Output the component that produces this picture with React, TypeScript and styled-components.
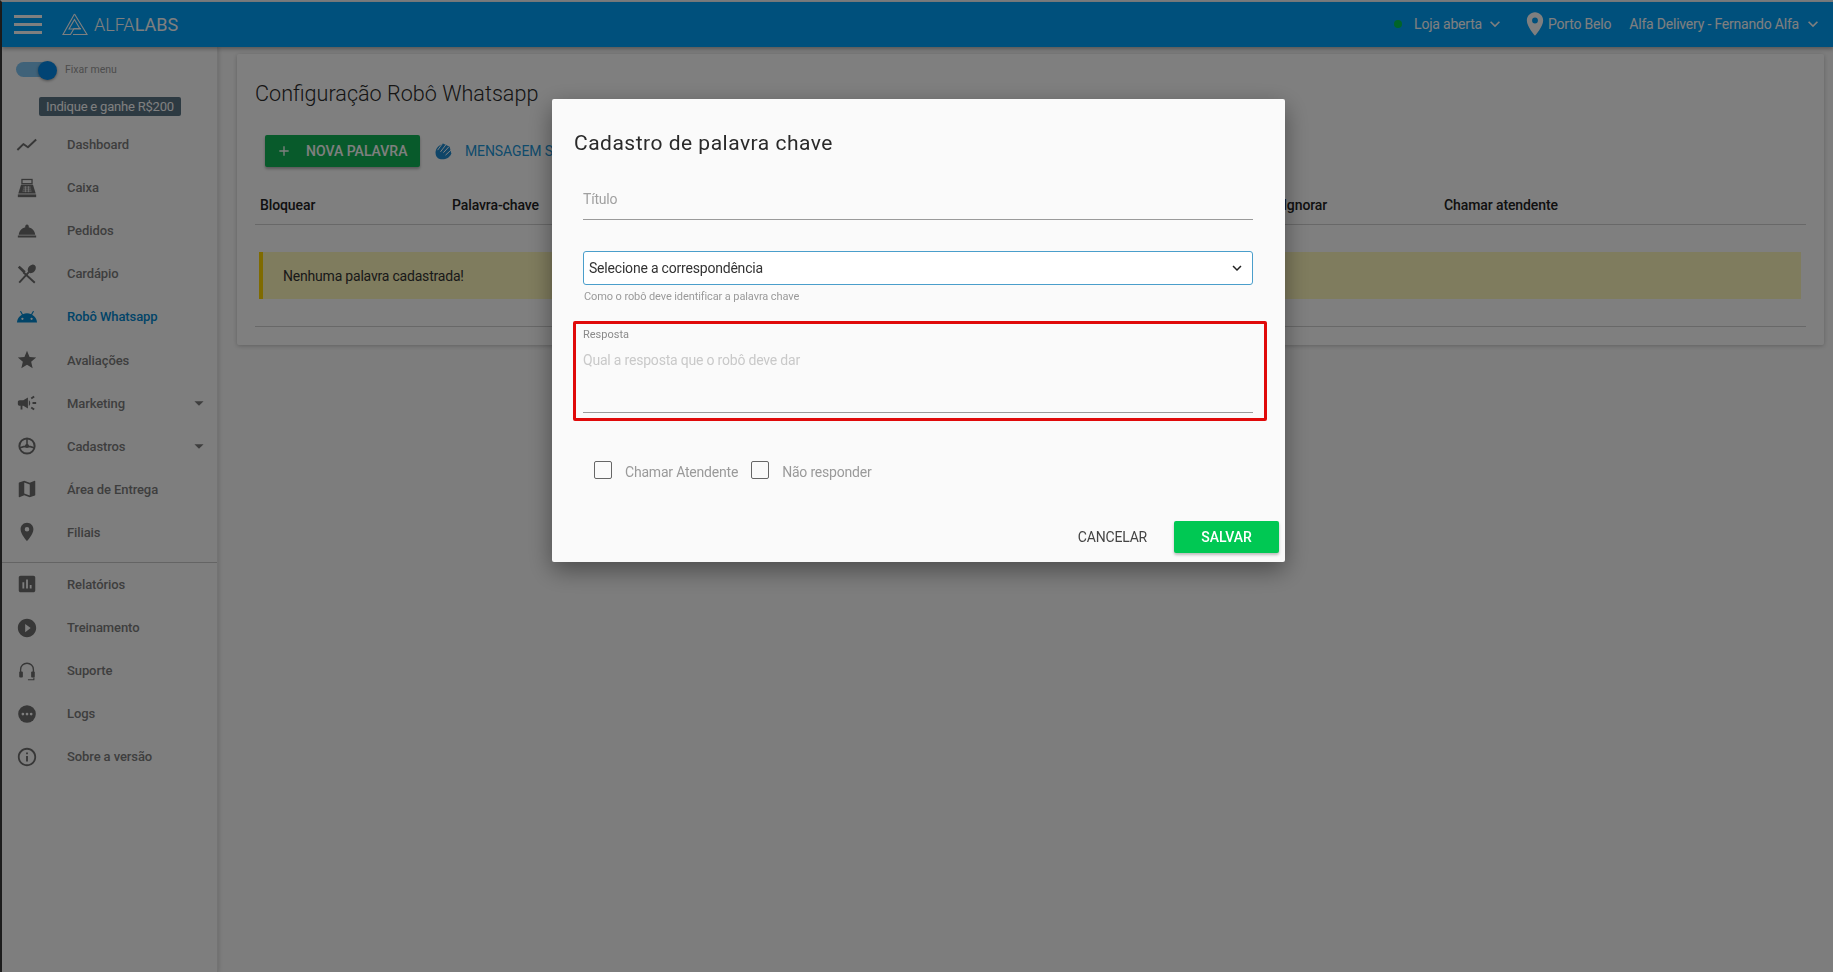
import React from "react";
import styled, { createGlobalStyle } from "styled-components";
import {
  MdRoomService, MdAndroid, MdStar, MdCampaign, MdMap, MdPlace,
  MdAssessment, MdPlayCircleFilled, MdInfoOutline, MdArrowDropDown,
  MdExpandMore, MdAdd,
} from "react-icons/md";

const Global = createGlobalStyle`
  html, body { margin: 0; padding: 0; height: 100%; overflow: hidden; }
  body { background: #fafafa; font-family: Roboto, "Liberation Sans", sans-serif; }
  * { box-sizing: border-box; }
`;
const Page = styled.div`height: 972px; display: flex; flex-direction: column; border-left: 2px solid #3c3c3c; border-top: 2px solid #f4f8fb;`;
const Header = styled.header`height: 45px; background: #01a0f8; flex: none; display: flex; align-items: center; padding: 0 10px 1px 12px; color: #fff; box-shadow: 0 2px 4px rgba(0,0,0,.3); position: relative; z-index: 2;`;
const Burger = styled.div`width: 28px; height: 19px; display: flex; flex-direction: column; justify-content: space-between; margin-right: 20px; span { display: block; height: 3px; background: #fff; }`;
const Logo = styled.div`display: flex; align-items: center; gap: 6px; font-size: 18px; font-weight: 300; b { font-weight: 400; }`;
const HeaderRight = styled.div`margin-left: auto; display: flex; align-items: center; font-size: 14px; letter-spacing: -.2px;`;
const Dot = styled.i`width: 8px; height: 8px; border-radius: 50%; background: #00c853; margin-right: 12px;`;
const HeaderGroup = styled.div<{ $gap: number }>`display: flex; align-items: center; margin-right: ${p => p.$gap}px;`;
const Chevron = styled(MdExpandMore)<{ $left: number }>`width: 20px; height: 20px; margin-left: ${p => p.$left}px;`;
const Pin = styled(MdPlace)`width: 28px; height: 28px; margin-right: -1px;`;
const Body = styled.div`flex: 1; display: flex; min-height: 0;`;
const Sidebar = styled.aside`width: 216px; flex: none; background: #fdfdfd; border-right: 1px solid #e6e6e6; box-shadow: 1px 0 4px rgba(0,0,0,.15); display: flex; flex-direction: column; padding-top: 13px;`;
const ToggleRow = styled.div`display: flex; align-items: center; padding-left: 14px; font-size: 10.5px; color: #9a9a9a; height: 18px;`;
const Track = styled.div`width: 38px; height: 15px; border-radius: 8px; background: #7fc4f2; position: relative; margin-right: 11px;`;
const Knob = styled.div`position: absolute; right: -3px; top: -1px; width: 19px; height: 19px; border-radius: 50%; background: #0288e8; box-shadow: 0 1px 3px rgba(0,0,0,.4);`;
const Promo = styled.div`align-self: flex-start; margin: 19px 0 0 37px; width: 142px; height: 19px; line-height: 19px; text-align: center; border-radius: 2px; background: #5a7485; color: #fff; font-size: 13px; letter-spacing: -.2px;`;
const Nav = styled.nav`margin-top: 7px; display: flex; flex-direction: column;`;
const NavItem = styled.div<{ $active?: boolean }>`height: 43.1px; display: flex; align-items: center; padding: 0 7px 0 14px; font-size: 13px; font-weight: 500; letter-spacing: -.1px; color: ${p => p.$active ? "#0288d1" : "#7c7c7c"}; svg.lead { width: 22px; height: 22px; flex: none; margin-right: 29px; color: ${p => p.$active ? "#0288d1" : "#6e6e6e"}; }`;
const Caret = styled(MdArrowDropDown)`margin-left: auto; width: 22px; height: 22px; color: #7c7c7c;`;
const NavRule = styled.hr`margin: 8px 0 0; border: 0; border-top: 1px solid #c8c8c8; height: 0;`;
const Main = styled.main`flex: 1; padding: 7px 9px 0 19px; min-width: 0;`;
const Card = styled.section`height: 291px; background: #fff; border-radius: 2px; box-shadow: 0 1px 4px rgba(0,0,0,.22); padding: 27px 18px 0;`;
const CardTitle = styled.h1`margin: 0; font-size: 21.6px; font-weight: 300; color: #2a2a2a; line-height: 26px;`;
const Actions = styled.div`display: flex; align-items: center; margin: 28px 0 0 10px;`;
const GreenBtn = styled.button`width: 155px; height: 32px; border: 0; border-radius: 2px; background: #10b556; color: #fff; font: 500 14px Roboto, sans-serif; display: flex; align-items: center; padding: 0 0 0 11px; box-shadow: 0 2px 3px rgba(0,0,0,.3); svg { width: 16px; height: 16px; margin-right: 14px; }`;
const BlueBtn = styled.div`margin-left: 13px; display: flex; align-items: center; color: #2196d8; font-size: 14px; letter-spacing: -.1px; svg { width: 20px; height: 20px; margin-right: 12px; color: #1f8bd0; }`;
const TableHead = styled.div`display: grid; grid-template-columns: 192px 831px 161px 1fr; margin-top: 20px; padding: 0 0 2px 5px; height: 38px; align-items: center; border-bottom: 1px solid #d0d0d0; font-size: 14px; font-weight: 500; letter-spacing: -.1px; color: #222;`;
const Alert = styled.div`margin: 27px 5px 0 4px; height: 47px; background: #fff8bc; border-left: 4px solid #ffd600; display: flex; align-items: center; padding-left: 20px; font-size: 14px; letter-spacing: -.2px; color: #333;`;
const Rule = styled.div`margin-top: 27px; border-top: 1px solid #d0d0d0;`;
const Backdrop = styled.div`position: fixed; inset: 0; background: rgba(0,0,0,.5); z-index: 10;`;
const Modal = styled.div`position: fixed; z-index: 11; left: 552px; top: 99px; width: 733px; height: 463px; background: #fafafa; border-radius: 2px; box-shadow: 0 8px 24px rgba(0,0,0,.4); padding: 30px 6px 0 21px; display: flex; flex-direction: column;`;
const ModalTitle = styled.h2`margin: 0 0 0 1px; font-size: 21px; font-weight: 400; color: #2a2a2a; letter-spacing: .5px; line-height: 28px;`;
const Fields = styled.div`padding: 0 26px 0 10px;`;
const TextField = styled.div`height: 42px; margin-top: 21px; border-bottom: 1px solid #9a9a9a; font-size: 14px; letter-spacing: -.2px; color: #a0a0a0; line-height: 20px; padding-top: 11px;`;
const Select = styled.div`height: 34px; margin-top: 31px; background: #fff; border: 1px solid #4a9ecb; border-radius: 3px; display: flex; align-items: center; justify-content: space-between; padding: 0 6px 0 5px; font-size: 14px; letter-spacing: -.2px; color: #333; svg { width: 18px; height: 18px; color: #222; }`;
const Hint = styled.div`margin: 5px 0 0 1px; font-size: 11px; letter-spacing: -.1px; color: #9a9a9a; line-height: 13px;`;
const RedBox = styled.div`margin: 18px 12px 0 0; height: 100px; border: 3px solid #e00a0a; border-radius: 2px; padding: 4px 11px 0 7px;`;
const SmallLabel = styled.div`font-size: 11px; color: #8a8a8a; line-height: 14px;`;
const AreaField = styled.div`margin-top: 8px; height: 63px; border-bottom: 1px solid #9a9a9a; font-size: 14px; letter-spacing: -.2px; color: #c9c9c9; line-height: 20px;`;
const Checks = styled.div`display: flex; align-items: center; margin: 42px 0 0 21px; font-size: 14px; letter-spacing: -.2px; color: #9a9a9a;`;
const Box = styled.div`width: 18px; height: 18px; border: 1px solid #666; border-radius: 2px; margin-right: 13px; position: relative; top: -2px;`;
const CheckLabel = styled.span`margin-right: 13px;`;
const Footer = styled.div`margin-top: auto; margin-bottom: 9px; display: flex; align-items: center; justify-content: flex-end;`;
const Cancel = styled.button`background: none; border: 0; font: 400 14px Roboto, sans-serif; letter-spacing: -.2px; color: #444; margin-right: 27px; padding: 0;`;
const Save = styled.button`width: 105px; height: 32px; border: 0; border-radius: 2px; background: #00c853; color: #fff; font: 500 14px Roboto, sans-serif; box-shadow: 0 2px 3px rgba(0,0,0,.25);`;

type IconProps = { className?: string };

const LogoMark = () => (
  <svg width="26" height="23" viewBox="0 0 26 23" fill="none" stroke="#fff" strokeWidth="1.1">
    <path d="M12.5 1 L1 21.5 H8.5 L12 15.5 H19" />
    <path d="M12.5 1 L25 21.5 H11" />
    <path d="M12.5 6.5 L7 16 H18 Z" />
  </svg>
);
const TrendIcon = ({ className }: IconProps) => (
  <svg className={className} viewBox="0 0 24 24" fill="none" stroke="currentColor">
    <path d="M1.5 17.5 L8 11 L13 14.5 L22 6" strokeWidth="2.1" strokeLinejoin="round" />
  </svg>
);
const CashIcon = ({ className }: IconProps) => (
  <svg className={className} viewBox="0 0 24 24">
    <rect x="6.5" y="2.7" width="11" height="4.6" fill="none" stroke="currentColor" strokeWidth="1.4" />
    <path d="M5.5 8.5 H18.5 L21.5 18 H2.5 Z" fill="currentColor" />
    <path d="M8 11 H16 M7.5 13.2 H16.5 M7 15.4 H17 M10.3 10 V16.6 M13.7 10 V16.6" stroke="#fdfdfd" strokeWidth=".7" />
    <rect x="2" y="19" width="20" height="3" fill="currentColor" />
  </svg>
);
const CutleryIcon = ({ className }: IconProps) => (
  <svg className={className} viewBox="0 0 24 24">
    <ellipse cx="17.2" cy="6.4" rx="3.9" ry="5.1" transform="rotate(40 17.2 6.4)" fill="currentColor" />
    <path d="M14 10 L3.5 21.5" stroke="currentColor" strokeWidth="2.1" />
    <path d="M2 5 L4 3 L10.5 9 L8.5 11.5 Z" fill="currentColor" />
    <path d="M8 10 L20.5 21.5" stroke="currentColor" strokeWidth="2.1" />
  </svg>
);
const RegistryIcon = ({ className }: IconProps) => (
  <svg className={className} viewBox="0 0 24 24">
    <circle cx="12" cy="12" r="9.4" fill="currentColor" />
    <circle cx="12" cy="12" r="7.2" fill="#fdfdfd" />
    <path d="M12 4 V13 M4.5 13.8 Q12 11 19.5 13.8" fill="none" stroke="currentColor" strokeWidth="1.7" />
    <circle cx="12" cy="12" r="2.3" fill="currentColor" />
  </svg>
);
const HeadsetIcon = ({ className }: IconProps) => (
  <svg className={className} viewBox="0 0 24 24">
    <path d="M5 14 V10.5 a7 7 0 0 1 14 0 V14" fill="none" stroke="currentColor" strokeWidth="1.5" />
    <rect x="3.5" y="12.5" width="4" height="6.5" rx="1" fill="currentColor" />
    <rect x="16.5" y="12.5" width="4" height="6.5" rx="1" fill="currentColor" />
    <path d="M19.5 19 V21.5 H13" fill="none" stroke="currentColor" strokeWidth="1.2" />
  </svg>
);
const LogsIcon = ({ className }: IconProps) => (
  <svg className={className} viewBox="0 0 24 24">
    <circle cx="12" cy="12" r="9.6" fill="currentColor" />
    <circle cx="7.5" cy="12" r="1.5" fill="#fdfdfd" />
    <circle cx="12" cy="12" r="1.5" fill="#fdfdfd" />
    <circle cx="16.5" cy="12" r="1.5" fill="#fdfdfd" />
  </svg>
);
const HandsIcon = () => (
  <svg viewBox="0 0 24 24">
    <path d="M3 14 C3 8 8 5 12 3 L20 7 L22 15 C20 21 13 23 8 21.5 C5 20.5 3 18 3 14Z" fill="currentColor" />
    <path d="M5.5 11 L11 3.5 M9 13 L15.5 4.5 M12.5 14 L19 7 M15 17 L21.5 11" stroke="#fff" strokeWidth="1.2" />
  </svg>
);

const items: [string, React.ComponentType<IconProps>, boolean?, boolean?][] = [
  ["Dashboard", TrendIcon],
  ["Caixa", CashIcon],
  ["Pedidos", MdRoomService],
  ["Cardápio", CutleryIcon],
  ["Robô Whatsapp", MdAndroid, true],
  ["Avaliações", MdStar],
  ["Marketing", MdCampaign, false, true],
  ["Cadastros", RegistryIcon, false, true],
  ["Área de Entrega", MdMap],
  ["Filiais", MdPlace],
];
const items2: [string, React.ComponentType<IconProps>][] = [
  ["Relatórios", MdAssessment],
  ["Treinamento", MdPlayCircleFilled],
  ["Suporte", HeadsetIcon],
  ["Logs", LogsIcon],
  ["Sobre a versão", MdInfoOutline],
];

export default function App() {
  return (
    <Page>
      <Global />
      <Header>
        <Burger><span /><span /><span /></Burger>
        <Logo><LogoMark /><span>ALFA<b>LABS</b></span></Logo>
        <HeaderRight>
          <HeaderGroup $gap={16}><Dot />Loja aberta<Chevron $left={3} /></HeaderGroup>
          <HeaderGroup $gap={18}><Pin />Porto Belo</HeaderGroup>
          <HeaderGroup $gap={0}>Alfa Delivery - Fernando Alfa<Chevron $left={4} /></HeaderGroup>
        </HeaderRight>
      </Header>
      <Body>
        <Sidebar>
          <ToggleRow><Track><Knob /></Track>Fixar menu</ToggleRow>
          <Promo>Indique e ganhe R$200</Promo>
          <Nav>
            {items.map(([t, I, a, c]) => (
              <NavItem key={t} $active={a}><I className="lead" />{t}{c && <Caret />}</NavItem>
            ))}
            <NavRule />
            {items2.map(([t, I]) => (
              <NavItem key={t}><I className="lead" />{t}</NavItem>
            ))}
          </Nav>
        </Sidebar>
        <Main>
          <Card>
            <CardTitle>Configuração Robô Whatsapp</CardTitle>
            <Actions>
              <GreenBtn><MdAdd />NOVA PALAVRA</GreenBtn>
              <BlueBtn><HandsIcon />MENSAGEM S</BlueBtn>
            </Actions>
            <TableHead><span>Bloquear</span><span>Palavra-chave</span><span>Ignorar</span><span>Chamar atendente</span></TableHead>
            <Alert>Nenhuma palavra cadastrada!</Alert>
            <Rule />
          </Card>
        </Main>
      </Body>
      <Backdrop />
      <Modal>
        <ModalTitle>Cadastro de palavra chave</ModalTitle>
        <Fields>
          <TextField>Título</TextField>
          <Select>Selecione a correspondência<MdExpandMore /></Select>
          <Hint>Como o robô deve identificar a palavra chave</Hint>
        </Fields>
        <RedBox>
          <SmallLabel>Resposta</SmallLabel>
          <AreaField>Qual a resposta que o robô deve dar</AreaField>
        </RedBox>
        <Checks>
          <Box /><CheckLabel>Chamar Atendente</CheckLabel>
          <Box /><CheckLabel>Não responder</CheckLabel>
        </Checks>
        <Footer><Cancel>CANCELAR</Cancel><Save>SALVAR</Save></Footer>
      </Modal>
    </Page>
  );
}
